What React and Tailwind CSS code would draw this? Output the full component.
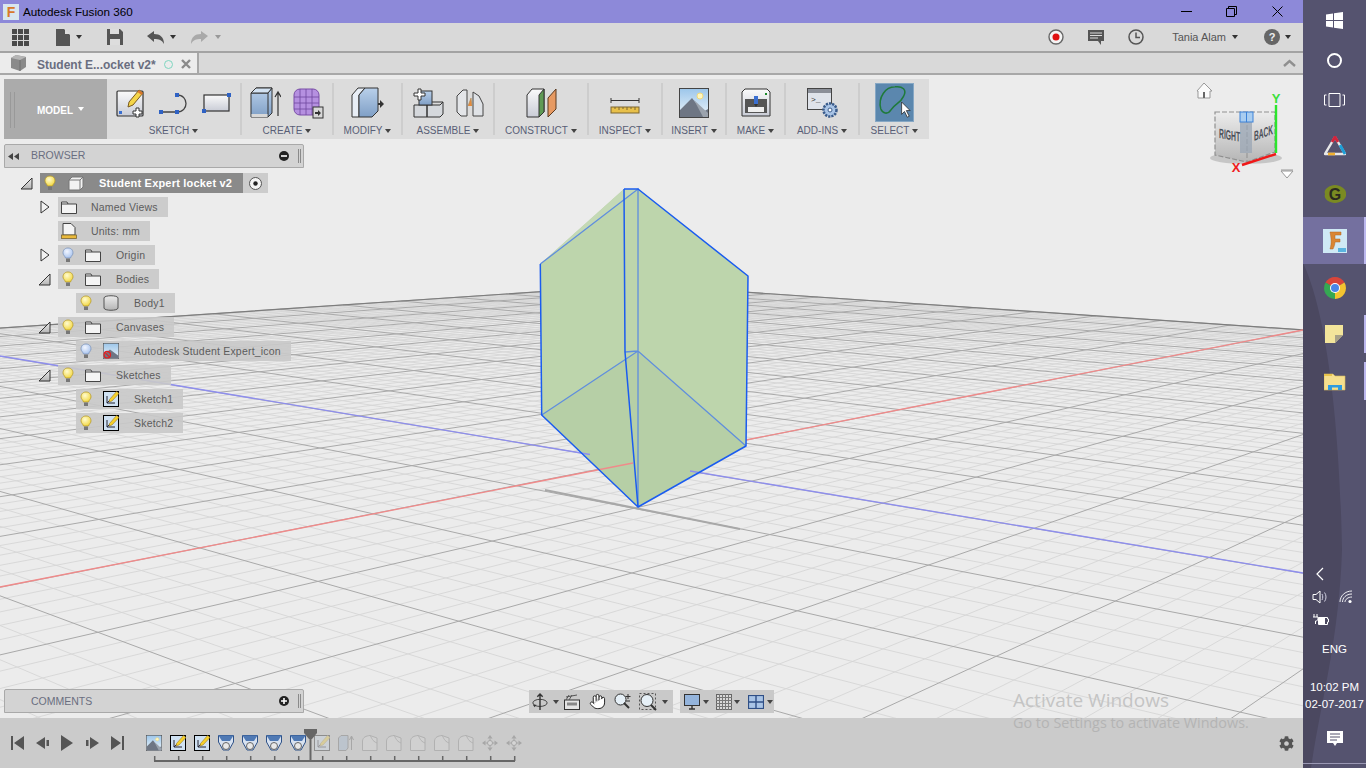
import { Hand } from "lucide-react";
import { FaCog } from "react-icons/fa";

const VR = [1993, 194];
const VL = [-1161, 163];
const O = [635, 462];
const SU = 0.971 / 60;
const SV = 0.7267 / 60;

// floor grid in perspective, from the two vanishing points
const project = (u, v) => {
  const s = u * SU;
  const w = v * SV;
  const d = 1 + s + w;
  return [(s * VR[0] + w * VL[0] + O[0]) / d, (s * VR[1] + w * VL[1] + O[1]) / d];
};

const buildGrid = () => {
  const minor = [];
  const major = [];
  for (let k = -60; k <= 60; k++) {
    const target = k % 5 === 0 ? major : minor;
    const vlo = Math.max(-60, (0.03 - 1 - k * SU) / SV);
    if (vlo < 60) {
      const a = project(k, vlo);
      const b = project(k, 60);
      target.push([a[0], a[1], b[0], b[1]]);
    }
    const ulo = Math.max(-60, (0.03 - 1 - k * SV) / SU);
    if (ulo < 60) {
      const a = project(ulo, k);
      const b = project(60, k);
      target.push([a[0], a[1], b[0], b[1]]);
    }
  }
  return { minor, major };
};

const grid = buildGrid();
const backCorner = project(60, 60);
const backLeft = project(0, 60);
const backRight = project(60, 0);

const Caret = ({ className = "border-t-[#555]" }) => (
  <span className={`inline-block w-0 h-0 border-l-[3.5px] border-r-[3.5px] border-t-[4px] border-l-transparent border-r-transparent ${className}`} />
);

/* ---------- toolbar icons ---------- */

const Defs = () => (
  <svg className="absolute w-0 h-0">
    <defs>
      <linearGradient id="paper" x1="0" y1="0" x2="0" y2="1">
        <stop offset="0" stopColor="#fafafa" />
        <stop offset="1" stopColor="#c9ccd6" />
      </linearGradient>
      <linearGradient id="steel" x1="0" y1="0" x2="0" y2="1">
        <stop offset="0" stopColor="#b9d0ea" />
        <stop offset="1" stopColor="#7f9fc6" />
      </linearGradient>
      <linearGradient id="sky" x1="0" y1="0" x2="0" y2="1">
        <stop offset="0" stopColor="#9cc6ea" />
        <stop offset="1" stopColor="#eef5fa" />
      </linearGradient>
      <linearGradient id="cubeface" x1="0" y1="0" x2="0" y2="1">
        <stop offset="0" stopColor="#ececec" />
        <stop offset="1" stopColor="#b5b5b5" />
      </linearGradient>
      <radialGradient id="bulbY" cx=".4" cy=".35" r=".7">
        <stop offset="0" stopColor="#fffbd0" />
        <stop offset="1" stopColor="#f2d63c" />
      </radialGradient>
      <radialGradient id="bulbB" cx=".4" cy=".35" r=".7">
        <stop offset="0" stopColor="#f2f6ff" />
        <stop offset="1" stopColor="#a6c2ee" />
      </radialGradient>
    </defs>
  </svg>
);

const SketchIcon = () => (
  <svg width="30" height="30" viewBox="0 0 30 30">
    <rect x="1" y="3" width="26" height="25" fill="url(#paper)" stroke="#333" strokeWidth="1.2" rx="1" />
    <rect x="3" y="23" width="3" height="3" fill="#3a6fd0" />
    <path d="M13 14 L23 2 L27 5 L17 17 L12 19 Z" fill="#f4d54a" stroke="#7a5a20" />
    <path d="M23 2 L27 5 L25.5 7 L21.5 4 Z" fill="#d9772f" />
    <path d="M20 20 h3 v3 h3 v3 h-3 v3 h-3 v-3 h-3 v-3 h3 Z" fill="#fff" stroke="#333" />
  </svg>
);

const ArcIcon = () => (
  <svg width="32" height="30" viewBox="0 0 32 30">
    <path d="M3 24 H19 C31 24 31 7 19 7" fill="none" stroke="#444" strokeWidth="1.3" />
    <rect x="1" y="22" width="4" height="4" fill="#2f62c4" />
    <rect x="17" y="22" width="4" height="4" fill="#2f62c4" />
    <rect x="17" y="5" width="4" height="4" fill="#2f62c4" />
  </svg>
);

const RectIcon = () => (
  <svg width="30" height="30" viewBox="0 0 30 30">
    <rect x="2" y="7" width="25" height="16" fill="url(#paper)" stroke="#333" strokeWidth="1.2" />
    <rect x="0" y="21" width="4" height="4" fill="#2f62c4" />
    <rect x="25" y="5" width="4" height="4" fill="#2f62c4" />
  </svg>
);

const ExtrudeIcon = () => (
  <svg width="31" height="32" viewBox="0 0 31 32">
    <path d="M1 6 L6 1 H22 V26 L18 30 H1 Z" fill="url(#steel)" stroke="#333" />
    <path d="M1 6 H18 V30 M18 6 L22 1" fill="none" stroke="#333" />
    <path d="M1 6 L6 1 H22 L18 6 Z" fill="#d3e2f2" stroke="#333" />
    <rect x="1.5" y="27" width="16" height="3" fill="#d8d8d8" />
    <path d="M28 29 V6 M25 10 L28 5 L31 10" fill="none" stroke="#333" strokeWidth="1.2" />
  </svg>
);

const FormIcon = () => (
  <svg width="31" height="32" viewBox="0 0 31 32">
    <rect x="1" y="2" width="25" height="26" rx="6" fill="#b590e0" stroke="#7a4ea8" />
    <path d="M1 10 H26 M1 16 H26 M1 22 H26 M7 2 V28 M13 2 V28 M19 2 V28" stroke="#6f46a0" strokeWidth=".8" />
    <rect x="20" y="20" width="10" height="11" fill="#d8d8d8" stroke="#333" />
    <path d="M22 25 h3 v-2 l3 3 -3 3 v-2 h-3 Z" fill="#333" />
  </svg>
);

const PressIcon = () => (
  <svg width="33" height="32" viewBox="0 0 33 32">
    <path d="M1 30 V8 L7 1 H14 L8 8 V30 Z" fill="#e8eef6" stroke="#333" />
    <path d="M8 30 V8 L14 1 H27 V24 L21 30 Z" fill="url(#steel)" stroke="#333" />
    <path d="M27 16 h2 v-3 l4 4 -4 4 v-3 h-2 Z" fill="#333" />
  </svg>
);

const AssembleIcon = () => (
  <svg width="31" height="30" viewBox="0 0 31 30">
    <path d="M1 17 H14 V29 H1 Z M14 17 H27 L30 14 V26 L27 29 H14 Z" fill="#d5d8dc" stroke="#333" />
    <path d="M14 17 L17 14 H30" fill="none" stroke="#333" />
    <rect x="6" y="3" width="13" height="14" fill="url(#steel)" stroke="#333" />
    <path d="M5 1 h3 v4 h4 v3 h-4 v4 h-3 v-4 h-4 v-3 h4 Z" fill="#fff" stroke="#333" />
  </svg>
);

const JointIcon = () => (
  <svg width="28" height="30" viewBox="0 0 28 30">
    <path d="M1 8 L7 2 H11 V28 H5 L1 24 Z" fill="#e3e5e8" stroke="#444" />
    <path d="M17 4 L23 8 L27 16 V28 H17 Z" fill="#dfe2e6" stroke="#444" />
    <path d="M12 18 L15 10 L16 18" fill="#e58a3c" stroke="#a85" strokeWidth=".6" />
  </svg>
);

const ConstructIcon = () => (
  <svg width="31" height="30" viewBox="0 0 31 30">
    <path d="M1 7 L6 1 H18 V24 L13 29 H1 Z" fill="url(#paper)" stroke="#333" />
    <path d="M13 7 L18 1 V24 L13 29 Z" fill="#5f9a55" stroke="#333" />
    <path d="M22 10 L30 1 V21 L22 29 Z" fill="#e79a62" stroke="#5a3a20" />
  </svg>
);

const InspectIcon = () => (
  <svg width="30" height="30" viewBox="0 0 30 30">
    <path d="M1 10 V15 M29 10 V15 M1 12.5 H29" stroke="#333" fill="none" />
    <rect x="1" y="19" width="28" height="6" fill="#e8c04a" stroke="#7c6630" />
    <path d="M5 19 v2 M9 19 v3 M13 19 v2 M17 19 v3 M21 19 v2 M25 19 v3" stroke="#7c6630" />
  </svg>
);

const PictureIcon = ({ size = 30 }) => (
  <svg width={size} height={size} viewBox="0 0 30 30">
    <rect x=".5" y=".5" width="29" height="29" fill="url(#sky)" stroke="#444" />
    <circle cx="21" cy="8" r="3" fill="#fff7c0" stroke="#f1d97a" />
    <path d="M1 29 V22 L13 10 L24 24 L29 21 V29 Z" fill="#6e7684" />
    <path d="M15 12 L29 25 V29 H24 Z" fill="#9ba3ad" />
  </svg>
);

const MakeIcon = () => (
  <svg width="30" height="30" viewBox="0 0 30 30">
    <path d="M4 1 H26 L29 4 V28 H1 V4 Z" fill="url(#paper)" stroke="#333" />
    <rect x="4" y="11" width="22" height="14" fill="#555" />
    <rect x="7" y="19" width="16" height="5" fill="#eee" />
    <rect x="13" y="8" width="4" height="8" fill="#3a6fd0" />
    <path d="M13 16 h4 l-2 3 Z" fill="#333" />
    <rect x="24" y="5" width="2" height="2" fill="#1a8a2a" />
  </svg>
);

const AddinsIcon = () => (
  <svg width="31" height="30" viewBox="0 0 31 30">
    <rect x=".5" y=".5" width="24" height="21" fill="#dfe3ea" stroke="#444" />
    <rect x="1" y="1" width="23" height="4" fill="#8b8f98" />
    <text x="4" y="14" fontSize="8" fill="#333" fontFamily="Liberation Mono, monospace">{">_"}</text>
    <circle cx="23" cy="22" r="6.5" fill="#a9c4e6" stroke="#3a5c8c" strokeWidth="2.5" strokeDasharray="2.2 1" />
    <circle cx="23" cy="22" r="2" fill="#fff" stroke="#3a5c8c" />
  </svg>
);

const SelectIcon = () => (
  <svg width="39" height="39" viewBox="0 0 39 39" className="bg-[#5b87ae] border border-[#86a7c4]">
    <path d="M5 26 C2 14 10 3 20 3 C28 2 33 6 29 13 C26 20 20 21 16 27 C12 33 7 31 5 26 Z" fill="none" stroke="#1f7a3a" strokeWidth="1.6" />
    <path d="M27 19 L27 32 L30 29 L33 35 L35 34 L32 28 L36 28 Z" fill="#fff" stroke="#222" strokeWidth=".8" />
  </svg>
);

const Section = ({ width, label, gap = "gap-3", children }) => (
  <div className={`flex flex-col items-center ${width}`}>
    <div className={`flex items-center justify-center h-[39px] mt-1 ${gap}`}>{children}</div>
    <div className="flex items-center gap-[3px] h-[17px] text-[10px] text-[#595e76]">
      {label}
      <Caret className="border-t-[#444]" />
    </div>
  </div>
);

const Sep = () => <div className="w-0.5 h-[52px] mt-1 bg-[#cdcdcd]" />;

/* ---------- browser tree icons ---------- */

const Bulb = ({ blue }) => (
  <svg width="12" height="16" viewBox="0 0 12 16">
    <path d="M6 1 C2 1 1 4 1 6 C1 8 3 9 3.5 11 H8.5 C9 9 11 8 11 6 C11 4 10 1 6 1 Z" fill={blue ? "url(#bulbB)" : "url(#bulbY)"} stroke={blue ? "#7d96bb" : "#b89a2a"} strokeWidth=".8" />
    <rect x="4" y="11.5" width="4" height="3.5" fill="#777" />
  </svg>
);

const Folder = () => (
  <svg width="16" height="14" viewBox="0 0 16 14">
    <path d="M.5 2 H6 L7 4 H15.5 V13.5 H.5 Z" fill="#f4f4f4" stroke="#444" />
    <path d="M.5 4 H7" stroke="#444" />
  </svg>
);

const Units = () => (
  <svg width="16" height="16" viewBox="0 0 16 16">
    <path d="M2 0.5 H10 L14 4.5 V12 H2 Z" fill="#f4f4f4" stroke="#444" />
    <rect x=".5" y="12" width="15" height="3.5" fill="#eab93a" stroke="#7c6630" strokeWidth=".8" />
  </svg>
);

const BodyCube = () => (
  <svg width="16" height="15" viewBox="0 0 16 15">
    <path d="M1 4 L4 1 H15 V11 L12 14 H1 Z" fill="#f2f2f2" stroke="#777" />
    <path d="M1 4 H12 V14 M12 4 L15 1" fill="none" stroke="#777" />
  </svg>
);

const Cylinder = () => (
  <svg width="16" height="16" viewBox="0 0 16 16">
    <path d="M1 3 C1 0 15 0 15 3 V13 C15 16 1 16 1 13 Z" fill="url(#cubeface)" stroke="#555" />
  </svg>
);

const CanvasThumb = () => (
  <svg width="16" height="16" viewBox="0 0 30 30">
    <rect x=".5" y=".5" width="29" height="29" fill="url(#sky)" stroke="#444" />
    <path d="M1 29 V22 L13 12 L29 24 V29 Z" fill="#6e7684" />
    <circle cx="8" cy="22" r="6" fill="none" stroke="#d22" strokeWidth="2.5" />
    <path d="M4 18 L12 26" stroke="#d22" strokeWidth="2.5" />
  </svg>
);

const SketchThumb = ({ dim }) => (
  <svg width="16" height="16" viewBox="0 0 16 16" className={dim ? "opacity-30" : ""}>
    <rect x=".5" y=".5" width="15" height="15" fill="#cfe1f2" stroke="#000" />
    <path d="M4 12 V5 M4 12 H12 M4 12 L10 6" stroke="#223" fill="none" />
    <path d="M6.5 8.5 L13.5 .5 L16 2.5 L9 10 L6 11 Z" fill="#f5d02c" stroke="#8a6a20" strokeWidth=".5" />
  </svg>
);

const ExpandOpen = () => (
  <svg width="13" height="13" viewBox="0 0 13 13">
    <path d="M1 12 H12 V1 Z" fill="url(#cubeface)" stroke="#333" />
  </svg>
);

const ExpandClosed = () => (
  <svg width="10" height="14" viewBox="0 0 10 14" className="ml-0.5">
    <path d="M1 1 L9 7 L1 13 Z" fill="#f2f2f2" stroke="#333" />
  </svg>
);

// one line of the browser tree, expander sits left of the grey bar
const TreeRow = ({ level, expander, bulb, icon, label, iconGap = "ml-[7px]", textGap = "ml-[15px]" }) => (
  <div className={`flex items-center h-5 ${level}`}>
    <div className="w-5 flex justify-start shrink-0">
      {expander === "open" && <ExpandOpen />}
      {expander === "closed" && <ExpandClosed />}
    </div>
    <div className="flex items-center h-5 bg-[#c9c9c9]/90 pr-2.5">
      {bulb && (
        <div className="w-5 flex justify-center">
          <Bulb blue={bulb === "blue"} />
        </div>
      )}
      <div className={`w-4 flex justify-center ${iconGap}`}>{icon}</div>
      <span className={`${textGap} pt-px whitespace-nowrap`}>{label}</span>
    </div>
  </div>
);

const PanelGrip = () => <span className="w-[3px] h-[14px] border-x border-[#8a8a8a]" />;

/* ---------- timeline icons ---------- */

const Sweep = () => (
  <svg width="16" height="16" viewBox="0 0 16 16">
    <path d="M.5 .5 H15.5 V7 L11 15 H5 L.5 7 Z" fill="#d8e2f0" stroke="#2f5288" />
    <path d="M.5 .5 H15.5 L12 6 H4 Z" fill="#4f79b4" />
    <circle cx="8" cy="11" r="3.5" fill="#e8e8e8" stroke="#666" />
  </svg>
);

const Fillet = () => (
  <svg width="16" height="16" viewBox="0 0 16 16" className="opacity-30">
    <path d="M.5 6 C1 2 4 1 8 .5 L15 3 V15.5 H.5 Z" fill="#ddd" stroke="#777" />
    <path d="M8 .5 C10 3 10 6 15 8" fill="none" stroke="#777" />
  </svg>
);

const MoveCross = () => (
  <svg width="16" height="16" viewBox="0 0 16 16" className="opacity-30">
    <path d="M8 0 L10.5 3.5 H5.5 Z M8 16 L10.5 12.5 H5.5 Z M0 8 L3.5 5.5 V10.5 Z M16 8 L12.5 5.5 V10.5 Z" fill="#555" />
    <circle cx="8" cy="8" r="2.5" fill="#eee" stroke="#555" />
    <path d="M3.5 8 H5.5 M10.5 8 H12.5 M8 3.5 V5.5 M8 10.5 V12.5" stroke="#555" />
  </svg>
);

const ExtrudeFaded = () => (
  <svg width="16" height="16" viewBox="0 0 16 16" className="opacity-30">
    <path d="M.5 3 L3 .5 H10 V13 L8 15.5 H.5 Z" fill="#9cb5d4" stroke="#555" />
    <path d="M13.5 15 V2 M11.5 5 L13.5 1 L15.5 5" fill="none" stroke="#555" />
  </svg>
);

const Ruler = () => (
  <svg width="364" height="12" viewBox="0 0 364 12" className="block ml-2">
    <path d="M1 10 H362" stroke="#666" strokeWidth="2" />
    {Array.from({ length: 16 }, (_, i) => (
      <path key={i} d={`M${1.7 + i * 24} 5 V10`} stroke="#666" strokeWidth="1.5" />
    ))}
  </svg>
);

/* ---------- taskbar icons ---------- */

const Chrome = () => (
  <svg width="22" height="22" viewBox="0 0 22 22">
    <path d="M11 11 L1.5 5.5 A11 11 0 0 1 20.5 5.5 Z" fill="#d9453a" />
    <path d="M11 11 L20.5 5.5 A11 11 0 0 1 11 22 Z" fill="#f4c430" />
    <path d="M11 11 L11 22 A11 11 0 0 1 1.5 5.5 Z" fill="#35a853" />
    <circle cx="11" cy="11" r="5" fill="#fff" />
    <circle cx="11" cy="11" r="4" fill="#4a86e8" />
  </svg>
);

const NoteIcon = () => (
  <svg width="19" height="19" viewBox="0 0 19 19">
    <path d="M0 0 H18 V10 L10 18 H0 Z" fill="#f3e59b" />
    <path d="M18 10 L10 18 V10 Z" fill="#a8a288" />
  </svg>
);

const Explorer = () => (
  <svg width="22" height="18" viewBox="0 0 22 18">
    <path d="M0 1 H9 L11 3 H21 V17 H0 Z" fill="#f6df8e" stroke="#d7b95c" strokeWidth=".6" />
    <path d="M0 1 H8 V3 H0 Z" fill="#e8c34c" />
    <path d="M4 17 V12 H18 V17 H14 V14.5 H8 V17 Z" fill="#2f9be0" />
  </svg>
);

const Fusion = () => (
  <svg width="24" height="24" viewBox="0 0 24 24">
    <rect width="24" height="24" fill="#cfe9f5" />
    <path d="M7 20 C9 14 8 8 7 3 H18 V6 H12 V10 H17 V13 H12 C12 15 11 18 10 20 Z" fill="#d98634" stroke="#b5651d" strokeWidth=".5" />
    <rect x="15" y="19" width="8" height="4" fill="#5bb4e0" />
  </svg>
);

const TaskItem = ({ height = "h-[47px]", active, pinned, children }) => (
  <div className={`relative flex items-center justify-center ${height} ${active ? "bg-[#74709f]" : ""}`}>
    {children}
    {active && <span className="absolute right-0 inset-y-0 w-0.5 bg-[#bcb8ee]" />}
    {pinned && <span className="absolute right-0 top-1 bottom-[5px] w-0.5 bg-[#bcb8ee]" />}
  </div>
);

export default function App() {
  return (
    <div className="flex w-[1366px] h-[768px] overflow-hidden font-['Liberation_Sans',sans-serif] text-[11px] text-[#555]">
      <Defs />
      <div className="relative flex flex-col w-[1303px] h-full">
        {/* title bar */}
        <div className="flex items-center h-[23px] bg-[#8d89d9] text-black">
          <div className="ml-[3px] w-4 h-4 bg-[#d8e6ee] flex items-center justify-center text-[#d8792a] text-[14px] font-bold leading-none">F</div>
          <span className="ml-1 text-[11.7px]">Autodesk Fusion 360</span>
          <div className="ml-auto flex items-center mr-[20px]">
            <svg width="11" height="11" viewBox="0 0 11 11"><path d="M0 5.5 H11" stroke="#000" /></svg>
            <svg width="11" height="11" viewBox="0 0 11 11" className="ml-[34px]"><path d="M.5 2.5 H8.5 V10.5 H.5 Z M2.5 2.5 V.5 H10.5 V8.5 H8.5" fill="none" stroke="#000" /></svg>
            <svg width="11" height="11" viewBox="0 0 11 11" className="ml-[35px]"><path d="M.5 .5 L10.5 10.5 M10.5 .5 L.5 10.5" stroke="#000" /></svg>
          </div>
        </div>

        {/* quick access row */}
        <div className="flex items-center h-[30px] bg-[#d9d9d9] border-b-2 border-[#a3a3a3]">
          <svg width="17" height="17" viewBox="0 0 17 17" className="ml-3">
            {[0, 6, 12].map((x) => [0, 6, 12].map((y) => <rect key={`${x}-${y}`} x={x} y={y} width="5" height="5" fill="#4a4a4a" />))}
          </svg>
          <svg width="14" height="17" viewBox="0 0 14 17" className="ml-[27px]"><path d="M0 0 H8 L14 6 V17 H0 Z" fill="#555" /><path d="M9 0 L14 5 H9 Z" fill="#ddd" /></svg>
          <span className="ml-[6px] flex"><Caret className="border-t-[#333]" /></span>
          <svg width="16" height="16" viewBox="0 0 16 16" className="ml-[25px]"><path d="M0 0 H13 L16 3 V16 H0 Z" fill="#555" /><rect x="3" y="10" width="10" height="6" fill="#ddd" /><rect x="3" y="0" width="9" height="5" fill="#ddd" /></svg>
          <svg width="17" height="13" viewBox="0 0 17 13" className="ml-6"><path d="M0 5 L7 0 V3 C13 3 17 6 17 13 C15 9 12 8 7 8 V11 Z" fill="#555" /></svg>
          <span className="ml-[6px] flex"><Caret className="border-t-[#333]" /></span>
          <svg width="17" height="13" viewBox="0 0 17 13" className="ml-[15px]"><path d="M17 5 L10 0 V3 C4 3 0 6 0 13 C2 9 5 8 10 8 V11 Z" fill="#a9a9a9" /></svg>
          <span className="ml-[7px] flex"><Caret className="border-t-[#999]" /></span>

          <div className="ml-auto flex items-center">
            <svg width="16" height="16" viewBox="0 0 16 16"><circle cx="8" cy="8" r="7" fill="#f4f4f4" stroke="#666" strokeWidth="1.4" /><circle cx="8" cy="8" r="3.5" fill="#e01010" /></svg>
            <svg width="16" height="15" viewBox="0 0 16 15" className="ml-6"><path d="M0 0 H16 V11 H13 V15 L10 11 H0 Z" fill="#555" /><path d="M2 3 H14 M2 5.5 H14 M2 8 H10" stroke="#ddd" /></svg>
            <svg width="16" height="16" viewBox="0 0 16 16" className="ml-6"><circle cx="8" cy="8" r="7" fill="none" stroke="#555" strokeWidth="1.5" /><path d="M8 3.5 V8.5 H12" fill="none" stroke="#555" strokeWidth="1.5" /></svg>
            <span className="ml-[28px] text-[#555]">Tania Alam</span>
            <span className="ml-[6px] flex"><Caret className="border-t-[#333]" /></span>
            <svg width="16" height="16" viewBox="0 0 16 16" className="ml-[26px]"><circle cx="8" cy="8" r="8" fill="#666" /><text x="8" y="12" textAnchor="middle" fontSize="11" fontWeight="700" fill="#eee">?</text></svg>
            <span className="ml-[5px] mr-[12px] flex"><Caret className="border-t-[#333]" /></span>
          </div>
        </div>

        {/* document tab row */}
        <div className="flex h-[22px] bg-[#d9d9d9] border-b-2 border-[#a8a8a8]">
          <div className="flex items-center w-[199px] bg-[#ececec] border-r-2 border-[#a8a8a8]">
            <svg width="17" height="16" viewBox="0 0 17 16" className="ml-[10px]"><path d="M1 3 L6 0 L16 2 V12 L10 16 L1 13 Z" fill="#8a8a8a" /><path d="M1 3 L10 5 L16 2 L6 0 Z" fill="#b5b5b5" /><path d="M10 5 V16" stroke="#6f6f6f" /></svg>
            <span className="ml-[10px] mt-[3px] text-[12px] font-bold text-[#6a6e80] whitespace-nowrap">Student E...ocket v2*</span>
            <span className="ml-2 mt-[2px] w-[9px] h-[9px] rounded-full border-[1.5px] border-[#7fd6c0]" />
            <svg width="10" height="10" viewBox="0 0 10 10" className="ml-[8px] mt-[1px]"><path d="M1 1 L9 9 M9 1 L1 9" stroke="#8a8a8a" strokeWidth="2.4" /></svg>
          </div>
          <svg width="13" height="8" viewBox="0 0 13 8" className="ml-auto mr-[7px] self-center"><path d="M1 7 L6.5 2 L12 7" fill="none" stroke="#8f8f8f" strokeWidth="2.4" /></svg>
        </div>

        {/* 3d canvas */}
        <div className="relative flex-1 bg-[#ececec] overflow-hidden">
          <svg viewBox="0 75 1303 643" className="absolute inset-0 w-full h-full">
            {grid.minor.map((l, i) => (
              <line key={i} x1={l[0]} y1={l[1]} x2={l[2]} y2={l[3]} stroke="#d6d6d6" strokeWidth=".9" />
            ))}
            {grid.major.map((l, i) => (
              <line key={i} x1={l[0]} y1={l[1]} x2={l[2]} y2={l[3]} stroke="#a9a9a9" strokeWidth="1" />
            ))}
            <path d={`M${backLeft[0]} ${backLeft[1]} L${backCorner[0]} ${backCorner[1]} L${backRight[0]} ${backRight[1]}`} fill="none" stroke="#7d7d7d" strokeWidth="1.2" />

            {/* solid body */}
            <path d="M540.3 264 L624 189 H638 L748 276 L746 446 L638 507 L541.7 415 Z" fill="#bdd5ac" />
            <path d="M541.7 415 L638 351 L746 446 L638 507 Z" fill="#b6cfa6" />
            <path d="M540.3 264 L624 189 L638 189 Z" fill="#c4d9b5" />
            <line x1="0" y1="587" x2="633" y2="463" stroke="#f08a8a" strokeWidth="1.3" />
            <line x1="746" y1="440" x2="1303" y2="330" stroke="#f08a8a" strokeWidth="1.3" />
            <line x1="0" y1="356" x2="590" y2="454.5" stroke="#8e8eee" strokeWidth="1.3" />
            <line x1="690" y1="471" x2="1303" y2="573" stroke="#8e8eee" strokeWidth="1.3" />
            <path d="M545 490 L640 509 L740 529" fill="none" stroke="#a8a8a8" strokeWidth="1.8" />
            <path d="M540.3 264 L638 189 V507 M541.7 415 L638 351 L746 446 M625 352 L638 351" fill="none" stroke="#5f8ede" strokeWidth="1.3" />
            <path d="M624 189 H638 L748 276 L746 446 L638 507 L541.7 415 L540.3 264 M624 189 L625 352 L638 507" fill="none" stroke="#1a5cf0" strokeWidth="1.5" strokeLinejoin="round" />

            {/* view cube */}
            <path d="M1197 91 L1204 83 L1212 91 H1210 V98 H1198 V91 Z" fill="#fafafa" stroke="#999" />
            <rect x="1203" y="92" width="2" height="6" fill="#666" />
            <ellipse cx="1246" cy="158" rx="36" ry="6" fill="#999" opacity=".45" />
            <path d="M1215 112 H1275 V152 L1247 162 L1215 155 Z" fill="url(#cubeface)" stroke="#8f8f8f" strokeDasharray="5 2" strokeWidth="1.2" />
            <path d="M1247 118 V162" stroke="#8f8f8f" strokeDasharray="5 2" />
            <rect x="1240" y="120" width="12" height="33" fill="#9aa6b4" opacity=".75" />
            <rect x="1240" y="112" width="13" height="10" fill="#a9cdf0" stroke="#3c82d8" />
            <path d="M1246.5 112 V122" stroke="#3c82d8" />
            <text transform="translate(1219 138) scale(.62 1.25) skewY(5)" fontSize="11" fontWeight="700" fill="#4b4f58">RIGHT</text>
            <text transform="translate(1254 141) scale(.6 1.25) skewY(-10)" fontSize="11" fontWeight="700" fill="#4b4f58">BACK</text>
            <path d="M1276 105 V153" stroke="#2ce52c" strokeWidth="2.4" />
            <path d="M1242 165 L1276 154" stroke="#f01818" strokeWidth="2.4" />
            <text x="1276" y="103" textAnchor="middle" fontSize="13" fontWeight="700" fill="#3ae03a">Y</text>
            <text x="1236" y="172" textAnchor="middle" fontSize="13" fontWeight="700" fill="#f02020">X</text>
            <path d="M1281 171 H1293 L1287 178 Z" fill="#fff" stroke="#999" />
            <path d="M1281 170 H1293" stroke="#999" />
          </svg>

          {/* toolbar */}
          <div className="absolute left-1 top-1 flex h-[60px] bg-[#dcdcdc]">
            <div className="flex items-center w-[103px] pt-0.5 bg-[#ababab] text-white font-bold">
              <span className="ml-[6px] w-[5px] h-[36px] border-x border-[#999]" />
              <span className="ml-[22px] text-[10px]">MODEL</span>
              <span className="ml-[5px] flex -mt-0.5"><Caret className="border-t-white" /></span>
            </div>
            <Section width="w-[133px]" label="SKETCH">
              <SketchIcon />
              <ArcIcon />
              <RectIcon />
            </Section>
            <Sep />
            <Section width="w-[90px]" label="CREATE">
              <ExtrudeIcon />
              <FormIcon />
            </Section>
            <Sep />
            <Section width="w-[67px]" label="MODIFY">
              <PressIcon />
            </Section>
            <Sep />
            <Section width="w-[90px]" label="ASSEMBLE">
              <AssembleIcon />
              <JointIcon />
            </Section>
            <Sep />
            <Section width="w-[92px]" label="CONSTRUCT">
              <ConstructIcon />
            </Section>
            <Sep />
            <Section width="w-[72px]" label="INSPECT">
              <InspectIcon />
            </Section>
            <Sep />
            <Section width="w-[62px]" label="INSERT">
              <PictureIcon />
            </Section>
            <Sep />
            <Section width="w-[57px]" label="MAKE">
              <MakeIcon />
            </Section>
            <Sep />
            <Section width="w-[72px]" label="ADD-INS">
              <AddinsIcon />
            </Section>
            <Sep />
            <Section width="w-[69px]" label="SELECT">
              <SelectIcon />
            </Section>
          </div>

          {/* browser panel */}
          <div className="absolute left-1 top-[69px] w-[300px]">
            <div className="flex items-center h-6 bg-[#d3d3d3] border border-[#a9a9a9] rounded-t-[2px] text-[10.5px] text-[#6a6e80]">
              <svg width="11" height="7" viewBox="0 0 11 7" className="ml-[3px]"><path d="M5 0 L0 3.5 L5 7 Z M11 0 L6 3.5 L11 7 Z" fill="#444" /></svg>
              <span className="ml-[12px]">BROWSER</span>
              <svg width="10" height="10" viewBox="0 0 10 10" className="ml-auto -translate-x-[1px]"><circle cx="5" cy="5" r="5" fill="#222" /><path d="M2 5 H8" stroke="#fff" strokeWidth="1.6" /></svg>
              <span className="ml-[8px] mr-[2px] flex"><PanelGrip /></span>
            </div>
          </div>

          {/* browser tree */}
          <div className="absolute left-5 top-[98px] flex flex-col gap-1 text-[10.5px] tracking-[.2px] text-[#5c5c5c]">
            <div className="flex items-center h-5">
              <div className="w-5 flex justify-start shrink-0"><ExpandOpen /></div>
              <div className="flex items-center h-5 w-[203px] bg-[#8a8a8a] text-white font-bold text-[11px]">
                <div className="w-5 flex justify-center"><Bulb /></div>
                <div className="w-4 ml-[8px]"><BodyCube /></div>
                <span className="ml-[15px] pt-px whitespace-nowrap">Student Expert locket v2</span>
              </div>
              <div className="flex items-center justify-center h-5 w-[25px] bg-[#c9c9c9]/90">
                <svg width="13" height="13" viewBox="0 0 13 13"><circle cx="6.5" cy="6.5" r="6" fill="#f4f4f4" stroke="#555" /><circle cx="6.5" cy="6.5" r="2.2" fill="#222" /></svg>
              </div>
            </div>
            <TreeRow level="ml-[18px]" expander="closed" icon={<Folder />} label="Named Views" iconGap="ml-[3px]" textGap="ml-[14px]" />
            <TreeRow level="ml-[18px]" icon={<Units />} label="Units: mm" iconGap="ml-[3px]" textGap="ml-[14px]" />
            <TreeRow level="ml-[18px]" expander="closed" bulb="blue" icon={<Folder />} label="Origin" />
            <TreeRow level="ml-[18px]" expander="open" bulb="yellow" icon={<Folder />} label="Bodies" />
            <TreeRow level="ml-[36px]" bulb="yellow" icon={<Cylinder />} label="Body1" />
            <TreeRow level="ml-[18px]" expander="open" bulb="yellow" icon={<Folder />} label="Canvases" />
            <TreeRow level="ml-[36px]" bulb="blue" icon={<CanvasThumb />} label="Autodesk Student Expert_icon" />
            <TreeRow level="ml-[18px]" expander="open" bulb="yellow" icon={<Folder />} label="Sketches" />
            <TreeRow level="ml-[36px]" bulb="yellow" icon={<SketchThumb />} label="Sketch1" />
            <TreeRow level="ml-[36px]" bulb="yellow" icon={<SketchThumb />} label="Sketch2" />
          </div>

          {/* comments panel */}
          <div className="absolute left-1 bottom-[5px] flex items-center w-[300px] h-6 bg-[#d3d3d3] border border-[#a9a9a9] rounded-t-[2px] text-[10.5px] text-[#6a6e80]">
            <span className="ml-[26px] pt-px">COMMENTS</span>
            <svg width="10" height="10" viewBox="0 0 10 10" className="ml-auto -translate-x-[1px]"><circle cx="5" cy="5" r="5" fill="#222" /><path d="M2 5 H8 M5 2 V8" stroke="#fff" strokeWidth="1.6" /></svg>
            <span className="ml-[8px] mr-[2px] flex"><PanelGrip /></span>
          </div>

          {/* navigation bar */}
          <div className="absolute left-[529px] bottom-[5px] flex gap-[7px] h-[23px]">
            <div className="flex items-center w-[144px] bg-[#c9c9c9]">
              <svg width="16" height="18" viewBox="0 0 18 18" className="ml-[3px]"><ellipse cx="9" cy="10" rx="8" ry="4" fill="none" stroke="#333" /><path d="M9 0 V18 M6 3 L9 0 L12 3" fill="none" stroke="#333" strokeWidth="1.6" /><path d="M1 12 L3 15 L5 12" fill="#333" /></svg>
              <span className="ml-[5px] flex"><Caret className="border-t-[#444]" /></span>
              <svg width="16" height="16" viewBox="0 0 16 16" className="ml-[5px]"><rect x=".5" y="6" width="15" height="9.5" fill="#e4e4e4" stroke="#333" /><rect x="3" y="8.5" width="10" height="3" fill="#888" /><path d="M2 6 L5 1 M5 6 L8 1 M2 3 L13 1" stroke="#555" /></svg>
              <Hand size={17} strokeWidth={1.4} className="ml-[9px] text-[#222] fill-white" />
              <svg width="18" height="17" viewBox="0 0 18 17" className="ml-[8px]"><circle cx="6.5" cy="6.5" r="5.5" fill="#e6f0f7" stroke="#333" /><path d="M10 10 L15 15" stroke="#333" strokeWidth="2" /><path d="M14 1 V6 M11.5 3.5 H16.5 M12 8 H16" stroke="#333" /></svg>
              <svg width="19" height="18" viewBox="0 0 19 18" className="ml-[7px]"><rect x=".5" y=".5" width="16" height="16" fill="none" stroke="#555" strokeDasharray="2 2" /><circle cx="8" cy="7.5" r="6" fill="#e6f0f7" stroke="#333" /><path d="M12 12 L17 17" stroke="#333" strokeWidth="2" /></svg>
              <span className="ml-1 flex"><Caret className="border-t-[#444]" /></span>
            </div>
            <div className="flex items-center w-[94px] bg-[#c9c9c9]">
              <svg width="16" height="16" viewBox="0 0 16 16" className="ml-[4px]"><rect x=".5" y=".5" width="15" height="11" fill="#94b4dc" stroke="#333" /><path d="M5 15 H11 M8 12 V15" stroke="#333" strokeWidth="1.4" /></svg>
              <span className="ml-[3px] flex"><Caret className="border-t-[#444]" /></span>
              <svg width="16" height="16" viewBox="0 0 16 16" className="ml-[7px]"><rect x=".5" y=".5" width="15" height="15" fill="#d9d9d9" stroke="#666" /><path d="M3.5 0 V16 M6.5 0 V16 M9.5 0 V16 M12.5 0 V16 M0 3.5 H16 M0 6.5 H16 M0 9.5 H16 M0 12.5 H16" stroke="#777" /></svg>
              <span className="ml-[2px] flex"><Caret className="border-t-[#444]" /></span>
              <svg width="16" height="14" viewBox="0 0 16 14" className="ml-[8px]"><rect x=".5" y=".5" width="15" height="13" fill="#a9c4e6" stroke="#2f4f86" strokeWidth="1.2" /><path d="M8 0 V14 M0 7 H16" stroke="#2f4f86" strokeWidth="1.4" /></svg>
              <span className="ml-[3px] flex"><Caret className="border-t-[#444]" /></span>
            </div>
          </div>
        </div>

        {/* timeline */}
        <div className="flex h-[50px] bg-[#cbcbcb]">
          <div className="flex items-center h-full pl-[11px] gap-[12px]">
            <svg width="13" height="14" viewBox="0 0 13 14"><path d="M0 0 H2 V14 H0 Z M13 0 V14 L3 7 Z" fill="#555" /></svg>
            <svg width="13" height="12" viewBox="0 0 13 12"><path d="M9 0 V12 L0 6 Z M10.5 3 H13 V9 H10.5 Z" fill="#555" /></svg>
            <svg width="13" height="16" viewBox="0 0 13 16"><path d="M0 0 L12 8 L0 16 Z" fill="#555" /></svg>
            <svg width="13" height="12" viewBox="0 0 13 12"><path d="M4 0 V12 L13 6 Z M0 3 H2.5 V9 H0 Z" fill="#555" /></svg>
            <svg width="13" height="14" viewBox="0 0 13 14"><path d="M0 0 L10 7 L0 14 Z M11 0 H13 V14 H11 Z" fill="#555" /></svg>
          </div>
          <div className="relative ml-[21px] pt-[17px]">
            <div className="flex ml-px gap-2">
              <PictureIcon size={16} />
              <SketchThumb />
              <SketchThumb />
              <Sweep />
              <Sweep />
              <Sweep />
              <Sweep />
              <SketchThumb dim />
              <ExtrudeFaded />
              <Fillet />
              <Fillet />
              <Fillet />
              <Fillet />
              <Fillet />
              <MoveCross />
              <MoveCross />
            </div>
            <Ruler />
            <svg width="13" height="32" viewBox="0 0 13 32" className="absolute left-[158.5px] top-[11px]">
              <path d="M0 0 H13 V4 L8 10 H5 L0 4 Z" fill="#666" />
              <path d="M6.5 8 V32" stroke="#666" strokeWidth="2" />
            </svg>
          </div>
          <FaCog size={15} className="ml-auto mr-[9px] self-center text-[#555]" />
        </div>

        {/* windows watermark sits across canvas and timeline */}
        <div className="absolute left-[1013px] top-[688px] font-['Open_Sans',sans-serif] pointer-events-none">
          <div className="text-[19px] leading-[25px] whitespace-nowrap text-[#c4c4c4]">Activate Windows</div>
          <div className="text-[14.4px] leading-[19px] whitespace-nowrap text-[#b4b4b4]">Go to Settings to activate Windows.</div>
        </div>
      </div>

      {/* windows taskbar */}
      <div className="relative flex flex-col w-[63px] h-full bg-[#55536f] text-white">
        <svg viewBox="0 0 63 768" className="absolute inset-0 w-full h-full">
          <path d="M0 263 C18 300 36 390 39 550 C36 640 18 700 8 768 H0 Z" fill="#4b4860" />
        </svg>
        <div className="relative flex flex-col">
          <TaskItem height="h-10">
            <svg width="17" height="17" viewBox="0 0 17 17"><path d="M0 2.5 L7 1.5 V8 H0 Z M8 1.3 L17 0 V8 H8 Z M0 9 H7 V15.5 L0 14.5 Z M8 9 H17 V17 L8 15.7 Z" fill="#fff" /></svg>
          </TaskItem>
          <TaskItem height="h-10">
            <span className="w-[15px] h-[15px] rounded-full border-2 border-white" />
          </TaskItem>
          <TaskItem height="h-10">
            <svg width="21" height="14" viewBox="0 0 21 14"><path d="M5 .5 H16 V13.5 H5 Z M2.5 2 H.5 V12 H2.5 M18.5 2 H20.5 V12 H18.5" fill="none" stroke="#fff" /></svg>
          </TaskItem>
          <div className="h-[3px]" />
          <TaskItem>
            <svg width="22" height="21" viewBox="0 0 22 21"><path d="M11 1 L21 18 H1 Z" fill="none" stroke="#e8e8e8" strokeWidth="2.4" strokeLinejoin="round" /><path d="M8 6 L11 1 L14 6" fill="none" stroke="#d0243c" strokeWidth="2.8" /><path d="M16 9 L21 18" stroke="#1c9fd8" strokeWidth="2.8" /><path d="M4 18 H11" stroke="#f0b030" strokeWidth="2.6" /></svg>
          </TaskItem>
          <TaskItem>
            <svg width="24" height="18" viewBox="0 0 24 18"><path d="M2 9 C0 4 7 0 12 0 C17 0 24 4 23 9 C24 14 17 18 12 18 C7 18 0 14 2 9 Z" fill="#7a8a22" /><text x="12" y="15" textAnchor="middle" fontSize="16" fontWeight="700" fill="#2a2a20">G</text></svg>
          </TaskItem>
          <TaskItem active>
            <Fusion />
          </TaskItem>
          <TaskItem>
            <Chrome />
          </TaskItem>
          <TaskItem pinned>
            <NoteIcon />
          </TaskItem>
          <TaskItem pinned>
            <Explorer />
          </TaskItem>
        </div>

        {/* system tray */}
        <div className="relative mt-auto flex flex-col items-center text-[11.5px]">
          <div className="flex w-full flex-col pl-[9px]">
            <svg width="10" height="14" viewBox="0 0 10 14" className="ml-[3px]"><path d="M8 1 L2 7 L8 13" fill="none" stroke="#fff" strokeWidth="1.2" /></svg>
            <div className="flex items-center mt-[9px]">
              <svg width="17" height="14" viewBox="0 0 17 14"><path d="M1 4.5 H4 L8 1 V13 L4 9.5 H1 Z" fill="none" stroke="#fff" /><path d="M10 4 C11 6 11 8 10 10 M12.5 2.5 C14.5 5 14.5 9 12.5 11.5" fill="none" stroke="#cfcfe0" /></svg>
              <svg width="14" height="14" viewBox="0 0 14 14" className="ml-[10px]"><path d="M1 12 C1 6 6 1 13 1 M3.5 12 C3.5 8 7 4 13 4 M6 12 C6 9.5 9 7 13 7" fill="none" stroke="#fff" strokeWidth=".9" /><circle cx="11" cy="11.5" r="1.6" fill="#fff" /></svg>
            </div>
            <svg width="17" height="12" viewBox="0 0 17 12" className="mt-[10px]"><path d="M2 0 V3 M5 0 V3 M1 3 H6 V5 C6 7 3.5 7 3.5 7 V10" fill="none" stroke="#fff" /><path d="M6.5 3.5 H15.5 V5 H16.5 V8 H15.5 V10.5 H6.5 Z" fill="none" stroke="#fff" /><rect x="7" y="4" width="6" height="6" fill="#fff" /></svg>
          </div>
          <span className="mt-[15px] leading-4">ENG</span>
          <span className="mt-[22px] leading-[17px]">10:02 PM</span>
          <span className="leading-[17px] whitespace-nowrap">02-07-2017</span>
          <svg width="16" height="16" viewBox="0 0 16 16" className="mt-[18px]"><path d="M0 0 H16 V12 H10 L8 15 L6 12 H0 Z" fill="#fff" /><path d="M3 3 H13 M3 6 H13 M3 9 H10" stroke="#55536f" /></svg>
          <div className="mt-[16px] mb-1 w-full h-px bg-[#9a98b4]" />
        </div>
      </div>
    </div>
  );
}
